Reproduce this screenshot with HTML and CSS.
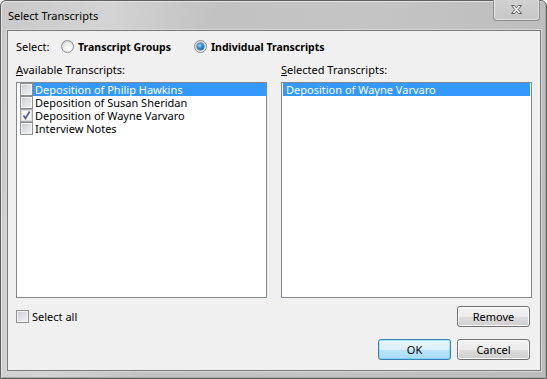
FILE: index.html
```html
<!DOCTYPE html>
<html>
<head>
<meta charset="utf-8">
<link rel="stylesheet" href="styles.css">
</head>
<body>
<div class="window">
  <div class="titlebar">
    <span class="title">Select Transcripts</span>
    <div class="close">
      <svg width="13" height="11" viewBox="0 0 13 11"><polygon points="1.5,1.5 4.5,1.5 6.5,3.8 8.5,1.5 11.5,1.5 8.2,5.5 11.5,9.5 8.5,9.5 6.5,7.2 4.5,9.5 1.5,9.5 4.8,5.5" fill="#f4f4f4" stroke="#5c5c5c" stroke-width="1" stroke-linejoin="round"/></svg>
    </div>
  </div>
  <div class="client">
    <div class="select-row">
      <span class="select-label">Select:</span>
      <label class="radio-opt first"><span class="radio"></span><b>Transcript Groups</b></label>
      <label class="radio-opt"><span class="radio on"></span><b>Individual Transcripts</b></label>
    </div>
    <div class="lists">
      <div class="col">
        <div class="col-label"><u>A</u>vailable Transcripts:</div>
        <div class="listbox">
          <div class="item"><span class="cb"></span><span class="text sel">Deposition of Philip Hawkins</span></div>
          <div class="item"><span class="cb"></span><span class="text">Deposition of Susan Sheridan</span></div>
          <div class="item"><span class="cb checked"><svg width="11" height="11" viewBox="0 0 11 11"><path d="M2.5 5.5 L4.5 8.5 L8.5 1.5" fill="none" stroke="#4a5f8a" stroke-width="1.6"/></svg></span><span class="text">Deposition of Wayne Varvaro</span></div>
          <div class="item"><span class="cb"></span><span class="text">Interview Notes</span></div>
        </div>
      </div>
      <div class="col">
        <div class="col-label"><u>S</u>elected Transcripts:</div>
        <div class="listbox right">
          <div class="item"><span class="text sel">Deposition of Wayne Varvaro</span></div>
        </div>
      </div>
    </div>
    <div class="bottom-row">
      <label class="selectall"><span class="cb plain"></span>Select all</label>
      <button class="btn">Remove</button>
    </div>
    <div class="buttons">
      <button class="btn default">OK</button>
      <button class="btn">Cancel</button>
    </div>
  </div>
</div>
</body>
</html>
```

FILE: styles.css
```css
* { box-sizing: border-box; }
html, body { margin: 0; padding: 0; background: #fff; }
body {
  font-family: "Noto Sans", "DejaVu Sans", sans-serif;
  font-size: 11px;
  color: #000;
}
.window {
  width: 547px;
  height: 379px;
  border: 1px solid #5f5f5f;
  border-radius: 6px 6px 0 0;
  background: linear-gradient(100deg, #c9c9c9 0%, #d4d4d4 18%, #c2c2c2 35%, #c4c4c4 60%, #bcbcbc 100%);
  padding: 0 5px 7px 6px;
  display: flex;
  flex-direction: column;
  box-shadow: inset 1px 1px 0 #e4e4e4, inset -1px -1px 0 #a8a8a8;
}
.titlebar {
  height: 29px;
  display: flex;
  align-items: center;
  justify-content: space-between;
  padding-left: 1px;
}
.title {
  font-size: 11px;
  color: #000;
}
.close {
  align-self: flex-start;
  margin-top: -1px;
  margin-right: 1px;
  width: 47px;
  height: 21px;
  border: 1px solid #8d8d8d;
  border-top: none;
  border-radius: 0 0 4px 4px;
  background: linear-gradient(#d2d2d2, #c6c6c6);
  box-shadow: inset 1px 0 0 #e6e6e6, inset -1px -1px 0 #e0e0e0;
  display: flex;
  align-items: center;
  justify-content: center;
}
.close svg { margin-top: -1px; }
.client {
  flex: 1;
  border: 1px solid #7a7a7a;
  background: #f0f0f0;
  padding: 8px 8px 10px 8px;
  display: flex;
  flex-direction: column;
  box-shadow: 0 0 0 1px #d8d8d8;
}
.select-row {
  height: 15px;
  display: flex;
  align-items: center;
}
.select-label { width: 45px; }
.radio-opt {
  display: flex;
  align-items: center;
  gap: 4px;
}
.radio-opt.first { width: 133px; }
.radio-opt b { font-weight: bold; font-size: 10.5px; }
.radio {
  width: 13px;
  height: 13px;
  border-radius: 50%;
  border: 1px solid #8b8b8b;
  background: radial-gradient(circle at 60% 65%, #ffffff 0%, #f2f2f2 35%, #c9c9c9 100%);
  display: flex;
  align-items: center;
  justify-content: center;
}
.radio.on::after {
  content: "";
  width: 7px;
  height: 7px;
  border-radius: 50%;
  background: radial-gradient(circle at 40% 35%, #9ad4fb 0%, #2a8ad4 45%, #0d4a86 100%);
  box-shadow: 0 0 0 0.5px #1d5c99;
}
.lists {
  margin-top: 8px;
  display: grid;
  grid-template-columns: 251px 251px;
  column-gap: 14px;
}
.col-label {
  height: 15px;
  line-height: 15px;
  margin-bottom: 5px;
}
.listbox {
  height: 216px;
  border: 1px solid #828790;
  background: #fff;
}
.item {
  height: 13px;
  display: flex;
  align-items: center;
}
.cb {
  width: 13px;
  height: 13px;
  flex: none;
  border: 1px solid #8e8f8f;
  background: linear-gradient(135deg, #c5c8cc 0%, #dfe1e4 50%, #f4f4f4 100%);
  box-shadow: inset 0 0 0 1px #f4f4f4;
  margin-left: 3px;
  display: flex;
  align-items: center;
  justify-content: center;
}
.cb.checked {
  background: #f7f7f7;
  box-shadow: inset 0 0 0 1px #e0e0e0;
  border-color: #a5a5a5;
}
.text {
  flex: 1;
  height: 13px;
  line-height: 13px;
  padding-left: 2px;
  white-space: nowrap;
}
.text.sel {
  background: #3399ff;
  color: #fff;
}
.listbox.right { padding: 0 1px; }
.listbox.right .text { padding-left: 3px; }
.bottom-row {
  margin-top: 8px;
  height: 21px;
  display: flex;
  align-items: center;
  justify-content: space-between;
  padding-right: 2px;
}
.selectall {
  display: flex;
  align-items: center;
  gap: 3px;
}
.selectall .cb { margin-left: 0; }
.buttons {
  margin-top: 12px;
  display: flex;
  justify-content: flex-end;
  gap: 6px;
  padding-right: 2px;
}
.btn {
  width: 73px;
  height: 21px;
  font-family: "Noto Sans", "DejaVu Sans", sans-serif;
  font-size: 11px;
  color: #000;
  border: 1px solid #707070;
  border-radius: 3px;
  background: linear-gradient(#f2f2f2 0%, #ebebeb 50%, #dddddd 51%, #cfcfcf 100%);
  box-shadow: inset 0 0 0 1px #fbfbfb;
  padding: 0;
  line-height: 17px;
}
.btn.default {
  border-color: #3c7fb1;
  background: linear-gradient(#eaf6fd 0%, #d9f0fc 50%, #bee6fd 51%, #a7d9f5 100%);
  box-shadow: inset 0 0 0 1px #48d2ff66;
}
```
